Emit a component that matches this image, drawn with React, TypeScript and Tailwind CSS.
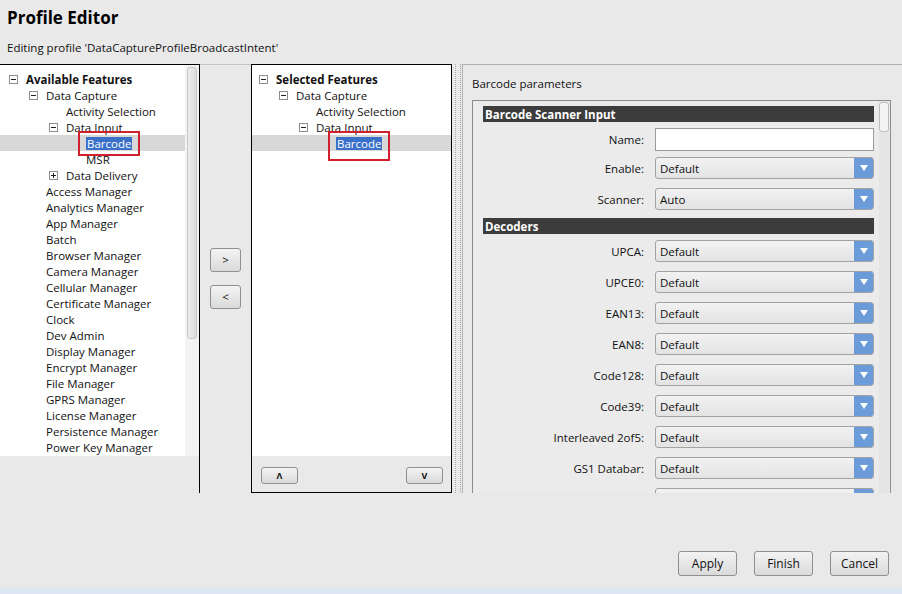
import React from "react";

type TreeNode = {
  label: string;
  level: number;
  toggle?: "-" | "+";
  bold?: boolean;
  selected?: boolean;
};

const available: TreeNode[] = [
  { label: "Available Features", level: 0, toggle: "-", bold: true },
  { label: "Data Capture", level: 1, toggle: "-" },
  { label: "Activity Selection", level: 2 },
  { label: "Data Input", level: 2, toggle: "-" },
  { label: "Barcode", level: 3, selected: true },
  { label: "MSR", level: 3 },
  { label: "Data Delivery", level: 2, toggle: "+" },
  { label: "Access Manager", level: 1 },
  { label: "Analytics Manager", level: 1 },
  { label: "App Manager", level: 1 },
  { label: "Batch", level: 1 },
  { label: "Browser Manager", level: 1 },
  { label: "Camera Manager", level: 1 },
  { label: "Cellular Manager", level: 1 },
  { label: "Certificate Manager", level: 1 },
  { label: "Clock", level: 1 },
  { label: "Dev Admin", level: 1 },
  { label: "Display Manager", level: 1 },
  { label: "Encrypt Manager", level: 1 },
  { label: "File Manager", level: 1 },
  { label: "GPRS Manager", level: 1 },
  { label: "License Manager", level: 1 },
  { label: "Persistence Manager", level: 1 },
  { label: "Power Key Manager", level: 1 },
];

const selected: TreeNode[] = [
  { label: "Selected Features", level: 0, toggle: "-", bold: true },
  { label: "Data Capture", level: 1, toggle: "-" },
  { label: "Activity Selection", level: 2 },
  { label: "Data Input", level: 2, toggle: "-" },
  { label: "Barcode", level: 3, selected: true },
];

const indentLeft = ["pl-[9px]", "pl-[29px]", "pl-[49px]", "pl-[69px]"];
const indentMid = ["pl-[7px]", "pl-[27px]", "pl-[47px]", "pl-[67px]"];

const ToggleBox = ({ kind }: { kind?: "-" | "+" }) => (
  <span
    className={`relative w-[9px] h-[9px] shrink-0 ${
      kind ? "border border-[#8e8e8e] bg-white" : ""
    }`}
  >
    {kind && (
      <span className="absolute left-[1px] top-[3px] w-[5px] h-[1px] bg-[#222]" />
    )}
    {kind === "+" && (
      <span className="absolute left-[3px] top-[1px] w-[1px] h-[5px] bg-[#222]" />
    )}
  </span>
);

const Tree = ({
  nodes,
  indents,
  tallMark,
}: {
  nodes: TreeNode[];
  indents: string[];
  tallMark?: boolean;
}) => (
  <div className="pt-[6px]">
    {nodes.map((n) => (
      <div
        key={n.label + n.level}
        className={`flex items-center h-[16px] ${indents[n.level]} ${
          n.selected ? "bg-[#d8d8d8]" : ""
        }`}
      >
        <ToggleBox kind={n.toggle} />
        <span
          className={`ml-[8px] whitespace-nowrap pt-[2px] ${n.bold ? "font-bold" : ""}`}
        >
          {n.selected ? (
            <span className="relative inline-block">
              <span className="bg-[#3a70c8] text-white px-[1px] leading-[13px] inline-block">
                {n.label}
              </span>
              <span
                className={`absolute -left-[8px] -right-[8px] -top-[4px] border-2 border-[#d0202c] ${
                  tallMark ? "-bottom-[8px]" : "-bottom-[3px]"
                }`}
              />
            </span>
          ) : (
            n.label
          )}
        </span>
      </div>
    ))}
  </div>
);

const SmallButton = ({ label, className }: { label: string; className: string }) => (
  <button
    className={`flex items-center justify-center rounded-[3px] border border-[#8f8f8f] bg-linear-to-b from-[#f3f3f3] to-[#dadada] text-[#111] ${className}`}
  >
    {label}
  </button>
);

const SelectBox = ({ value }: { value: string }) => (
  <div className="flex h-[22px] w-[219px] rounded-[3px] border border-[#a2a2a2] bg-linear-to-b from-[#f2f2f2] to-[#e3e3e3] overflow-hidden">
    <span className="flex-1 pl-[4px] leading-[21px] text-[#111]">{value}</span>
    <span className="w-[19px] bg-[#6b9bd9] flex items-center justify-center">
      <svg width="8" height="6" viewBox="0 0 8 6">
        <path d="M0 0 H8 L4 6 Z" fill="#fff" />
      </svg>
    </span>
  </div>
);

const Row = ({
  label,
  children,
  className,
}: {
  label: string;
  children: React.ReactNode;
  className: string;
}) => (
  <div className={`flex items-center ${className}`}>
    <span className="w-[161px] text-right text-[#111] whitespace-nowrap pt-[1px]">{label}</span>
    <div className="ml-[11px]">{children}</div>
  </div>
);

const SectionHeader = ({ title, className }: { title: string; className?: string }) => (
  <div
    className={`h-[16px] w-[391px] bg-[#3c3c3c] text-white font-bold leading-[17px] px-[2px] ${
      className ?? ""
    }`}
  >
    {title}
  </div>
);

const decoders = [
  "UPCA:",
  "UPCE0:",
  "EAN13:",
  "EAN8:",
  "Code128:",
  "Code39:",
  "Interleaved 2of5:",
  "GS1 Databar:",
];

export default function App() {
  return (
    <div className="w-[902px] h-[594px] bg-[#e9e9e9] overflow-hidden flex flex-col font-['Open_Sans',sans-serif] text-[11.5px] text-[#111]">
      {/* Header */}
      <div className="h-[64px] pl-[7px] shrink-0">
        <h1 className="mt-[8px] text-[17px] leading-[20px] font-bold text-black">
          Profile Editor
        </h1>
        <p className="mt-[12px] leading-[16px]">
          Editing profile 'DataCaptureProfileBroadcastIntent'
        </p>
      </div>

      {/* Body */}
      <div className="flex h-[429px] shrink-0">
        {/* Available features */}
        <div className="w-[200px] border-t border-r border-black flex flex-col">
          <div className="h-[391px] bg-white flex">
            <div className="flex-1 min-w-0">
              <Tree nodes={available} indents={indentLeft} />
            </div>
            <div className="w-[14px] bg-[#f3f3f3] pt-[2px] px-[2px]">
              <div className="h-[272px] rounded-[3px] border border-[#c6c6c6] bg-linear-to-r from-[#eeeeee] to-[#dcdcdc]" />
            </div>
          </div>
        </div>

        {/* Move buttons */}
        <div className="w-[51px] border-t border-[#c4c4c4] pl-[10px]">
          <SmallButton label=">" className="mt-[183px] w-[31px] h-[24px]" />
          <SmallButton label="<" className="mt-[13px] w-[31px] h-[24px]" />
        </div>

        {/* Selected features */}
        <div className="w-[201px] border border-black flex flex-col">
          <div className="h-[391px] bg-white">
            <Tree nodes={selected} indents={indentMid} tallMark />
          </div>
          <div className="flex justify-between pt-[11px] pl-[9px] pr-[8px]">
            <SmallButton label="Λ" className="w-[37px] h-[17px] text-[9px] font-bold" />
            <SmallButton label="V" className="w-[37px] h-[17px] text-[9px] font-bold" />
          </div>
        </div>

        {/* Splitter */}
        <div className="w-[10px] pl-[3px]">
          <div className="w-[6px] h-full border-x border-dotted border-[#a6a6a6]" />
        </div>

        {/* Parameters */}
        <div className="flex-1 border-t border-l border-[#b0b0b0] flex flex-col pl-[9px] min-w-0">
          <div className="pt-[11px] leading-[16px]">Barcode parameters</div>
          <div className="mt-[8px] w-[419px] flex-1 min-h-0 border border-[#8c8c8c] border-b-0 flex overflow-hidden bg-[#ebebeb]">
            <div className="pl-[10px] w-[401px] overflow-hidden">
              <SectionHeader title="Barcode Scanner Input" className="mt-[5px]" />
              <Row label="Name:" className="mt-[6px]">
                <div className="h-[23px] w-[219px] border border-[#9a9a9a] bg-white" />
              </Row>
              <Row label="Enable:" className="mt-[6px]">
                <SelectBox value="Default" />
              </Row>
              <Row label="Scanner:" className="mt-[9px]">
                <SelectBox value="Auto" />
              </Row>
              <SectionHeader title="Decoders" className="mt-[8px]" />
              {decoders.map((d, i) => (
                <Row key={d} label={d} className={i === 0 ? "mt-[6px]" : "mt-[9px]"}>
                  <SelectBox value="Default" />
                </Row>
              ))}
              <Row label="" className="mt-[9px]">
                <SelectBox value="" />
              </Row>
            </div>
            <div className="ml-[5px] w-[10px] bg-[#e4e4e4] pt-[1px]">
              <div className="h-[30px] rounded-[3px] border border-[#bdbdbd] bg-[#f4f4f4]" />
            </div>
          </div>
        </div>
      </div>

      {/* Footer buttons */}
      <div className="flex-1 flex justify-end items-start pt-[58px] pr-[13px] gap-[17px]">
        <SmallButton label="Apply" className="w-[59px] h-[25px] text-[12px]" />
        <SmallButton label="Finish" className="w-[59px] h-[25px] text-[12px]" />
        <SmallButton label="Cancel" className="w-[59px] h-[25px] text-[12px]" />
      </div>
      <div className="h-[6px] bg-[#dde7f3] shrink-0" />
    </div>
  );
}
